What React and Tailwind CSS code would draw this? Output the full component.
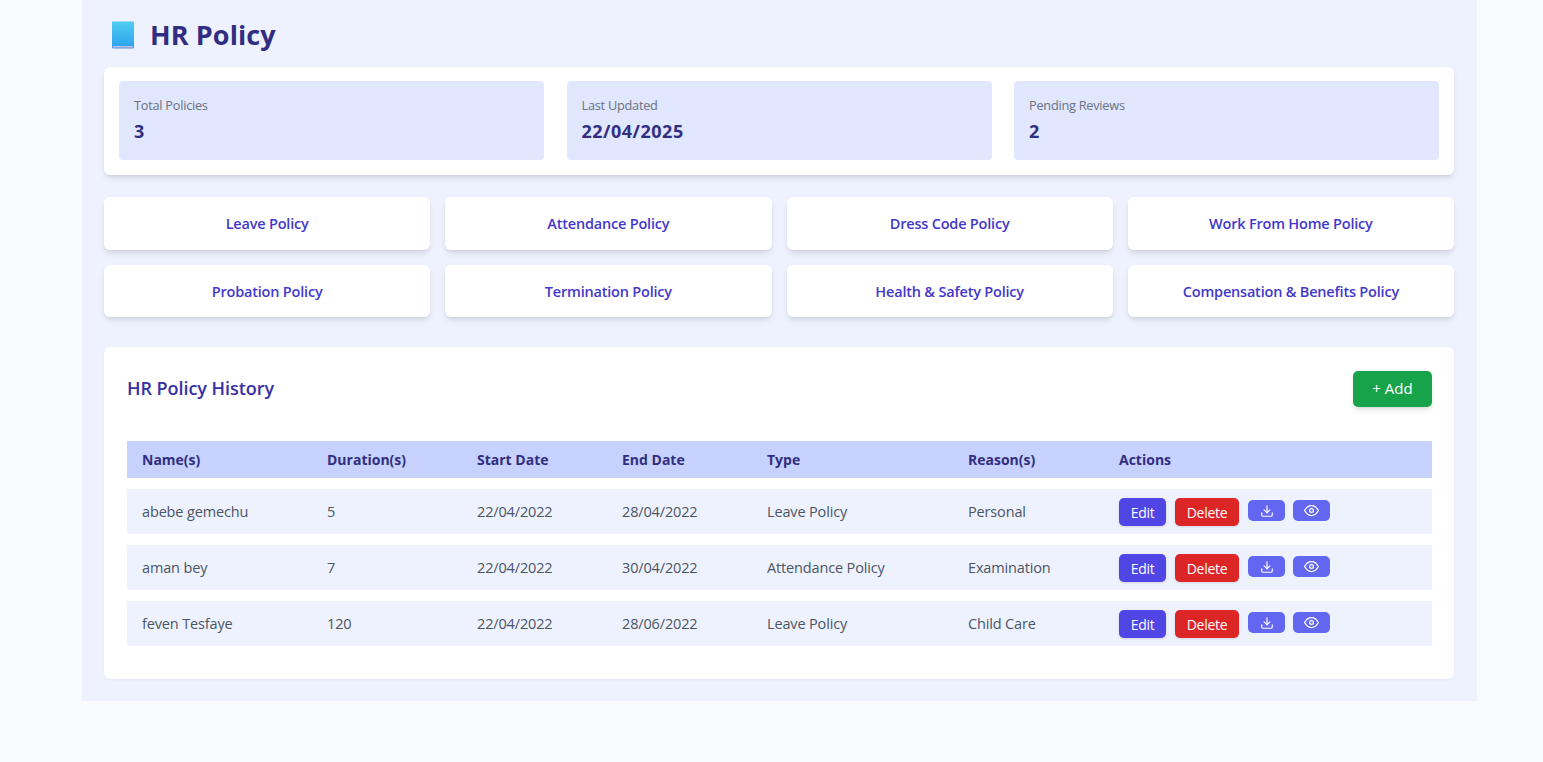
import React from 'react';
import { FiDownload, FiEye } from 'react-icons/fi';

const stats = [
  { label: 'Total Policies', value: '3' },
  { label: 'Last Updated', value: '22/04/2025' },
  { label: 'Pending Reviews', value: '2' },
];

const policies = [
  'Leave Policy',
  'Attendance Policy',
  'Dress Code Policy',
  'Work From Home Policy',
  'Probation Policy',
  'Termination Policy',
  'Health & Safety Policy',
  'Compensation & Benefits Policy',
];

const columns = ['Name(s)', 'Duration(s)', 'Start Date', 'End Date', 'Type', 'Reason(s)', 'Actions'];

const history = [
  { name: 'abebe gemechu', duration: '5', start: '22/04/2022', end: '28/04/2022', type: 'Leave Policy', reason: 'Personal' },
  { name: 'aman bey', duration: '7', start: '22/04/2022', end: '30/04/2022', type: 'Attendance Policy', reason: 'Examination' },
  { name: 'feven Tesfaye', duration: '120', start: '22/04/2022', end: '28/06/2022', type: 'Leave Policy', reason: 'Child Care' },
];

const BookIcon = () => (
  <svg width="22" height="28" viewBox="0 0 22 28" aria-hidden="true">
    <defs>
      <linearGradient id="cover" x1="0" y1="0" x2="0" y2="1">
        <stop offset="0" stopColor="#4fcdf2" />
        <stop offset="1" stopColor="#2fa4ee" />
      </linearGradient>
    </defs>
    <rect x="0" y="1" width="22" height="26.5" rx="1" fill="#5b8fd9" />
    <rect x="1" y="25" width="20" height="1.5" fill="#b5c3ea" />
    <rect x="0" y="0.5" width="22" height="24.5" rx="1" fill="url(#cover)" />
  </svg>
);

const Actions = () => (
  <div className="mt-0.5 flex items-start gap-[9px] text-white text-[14px] tracking-[-0.3px]">
    <button className="w-[47px] h-7 rounded-[5px] bg-[#4f46e5] shadow-sm">Edit</button>
    <button className="w-16 h-7 rounded-[5px] bg-[#dc2626] shadow-sm">Delete</button>
    <button className="w-[37px] h-[21px] mt-[2px] rounded-[5px] bg-[#6366f1] flex items-center justify-center" aria-label="Download">
      <FiDownload size={14} />
    </button>
    <button className="w-[37px] h-[21px] -ml-px mt-[2px] rounded-[5px] bg-[#6366f1] flex items-center justify-center" aria-label="View">
      <FiEye size={15} />
    </button>
  </div>
);

const App = () => {
  return (
    <div className="min-h-screen bg-[#f9fbfd] pl-[82px] pr-[66px] font-['Open_Sans','Noto_Sans',sans-serif]">
      <div className="h-[701px] bg-[#eef2ff] pl-[22px] pr-[23px]">
        <header className="h-[67px] pl-2 pt-0.5 flex items-center gap-4">
          <BookIcon />
          <h1 className="text-[27px] leading-8 font-bold tracking-[0.1px] text-[#312e81]">HR Policy</h1>
        </header>

        <section className="h-[107.5px] p-[15px] pt-[14px] grid grid-cols-3 gap-[22.5px] bg-white rounded-md shadow-md">
          {stats.map((stat) => (
            <div key={stat.label} className="bg-[#e0e7ff] rounded px-[15px] pt-[15px]">
              <p className="text-[12.75px] leading-[19px] tracking-[-0.25px] text-[#6b7280]">{stat.label}</p>
              <p className="mt-[3px] text-[18px] leading-[26px] tracking-[0.5px] font-bold text-[#312e81]">{stat.value}</p>
            </div>
          ))}
        </section>

        <section className="mt-[22.5px] grid grid-cols-4 gap-[15px]">
          {policies.map((policy) => (
            <button
              key={policy}
              className="h-[52.5px] pt-0.5 bg-white rounded-md shadow-md text-[14.5px] tracking-[-0.2px] font-semibold text-[#4338ca]"
            >
              {policy}
            </button>
          ))}
        </section>

        <section className="mt-[30px] h-[332px] bg-white rounded-md shadow-xs pl-[23px] pr-[22px] pt-[23.5px]">
          <div className="flex items-center justify-between">
            <h2 className="text-[18px] tracking-[-0.05px] font-semibold text-[#3730a3]">HR Policy History</h2>
            <button className="w-[79px] h-9 rounded-[5px] bg-[#16a34a] shadow-md text-white text-[15px] tracking-[0px]">
              + Add
            </button>
          </div>

          <table className="mt-[23px] w-full table-fixed border-separate border-spacing-x-0 border-spacing-y-[11px] text-left">
            <colgroup>
              <col className="w-[200px]" />
              <col className="w-[150px]" />
              <col className="w-[145px]" />
              <col className="w-[145px]" />
              <col className="w-[201px]" />
              <col className="w-[151px]" />
              <col />
            </colgroup>
            <thead>
              <tr className="bg-[#c7d2fe] h-[37px] text-[14px] tracking-[0px] text-[#312e81]">
                {columns.map((column) => (
                  <th key={column} className="p-0 first:pl-[15px] font-bold">{column}</th>
                ))}
              </tr>
            </thead>
            <tbody>
              {history.map((row) => (
                <tr key={row.name} className="bg-[#eef2ff] h-[45px] text-[14.5px] tracking-[-0.15px] text-[#4b5563]">
                  <td className="p-0 pt-px pl-[15px]">{row.name}</td>
                  <td className="p-0 pt-px">{row.duration}</td>
                  <td className="p-0 pt-px">{row.start}</td>
                  <td className="p-0 pt-px">{row.end}</td>
                  <td className="p-0 pt-px">{row.type}</td>
                  <td className="p-0 pt-px">{row.reason}</td>
                  <td className="p-0"><Actions /></td>
                </tr>
              ))}
            </tbody>
          </table>
        </section>
      </div>
    </div>
  );
};

export default App;
